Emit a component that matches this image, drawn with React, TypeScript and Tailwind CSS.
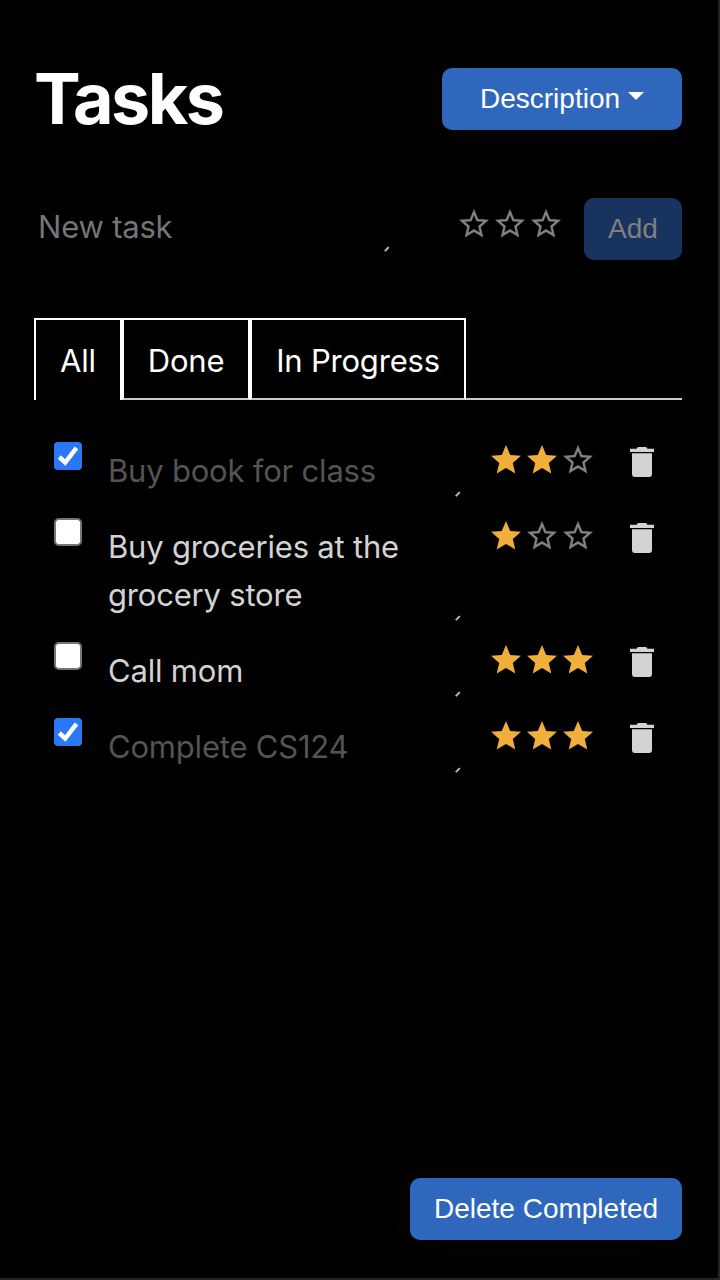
import React, { useState } from "react";

type Task = { id: number; text: string; done: boolean; priority: number };

const STAR =
  "M12 17.27L18.18 21l-1.64-7.03L22 9.24l-7.19-.61L12 2 9.19 8.63 2 9.24l5.46 4.73L5.82 21z";
const STAR_BORDER =
  "M22 9.24l-7.19-.62L12 2 9.19 8.63 2 9.24l5.46 4.73L5.82 21 12 17.27 18.18 21l-1.63-7.03L22 9.24zM12 15.4l-3.76 2.27 1-4.28-3.32-2.88 4.38-.38L12 6.1l1.71 4.04 4.38.38-3.32 2.88 1 4.28L12 15.4z";

function Stars({ value }: { value: number }) {
  return (
    <div className="flex h-9 w-[108px] shrink-0">
      {[1, 2, 3].map((n) => (
        <svg
          key={n}
          viewBox="0 0 24 24"
          className={n <= value ? "h-9 w-9 fill-[#f0ae3b]" : "h-9 w-9 fill-[#808080]"}
        >
          <path d={n <= value ? STAR : STAR_BORDER} />
        </svg>
      ))}
    </div>
  );
}

function Trash() {
  return (
    <svg viewBox="0 0 24 30" className="h-[30px] w-6 fill-[#d3d3d3]">
      <path d="M0 1.700H6.500L8 0H16L17.500 1.700H24V5H0Z M2 6.200H22V27Q22 30 19 30H5Q2 30 2 27Z" />
    </svg>
  );
}

function Grip() {
  return (
    <svg viewBox="0 0 6 6" className="h-1.5 w-1.5 shrink-0 stroke-[#c0c0c0]">
      <path d="M0.800 5.200L4.800 1.200" strokeWidth="1.900" />
    </svg>
  );
}

function Check({ checked, onClick }: { checked: boolean; onClick: () => void }) {
  return (
    <button
      role="checkbox"
      aria-checked={checked}
      onClick={onClick}
      className={
        checked
          ? "h-7 w-7 shrink-0 rounded-[4px] bg-[#2b78f6]"
          : "h-7 w-7 shrink-0 rounded-[5px] border-2 border-[#767676] bg-white"
      }
    >
      {checked && (
        <svg viewBox="0 0 28 28" className="h-7 w-7 fill-none stroke-white">
          <path d="M5.300 15L11.200 20.500L22.500 5.800" strokeWidth="4.500" />
        </svg>
      )}
    </button>
  );
}

const initial: Task[] = [
  { id: 1, text: "Buy book for class", done: true, priority: 2 },
  { id: 2, text: "Buy groceries at the grocery store", done: false, priority: 1 },
  { id: 3, text: "Call mom", done: false, priority: 3 },
  { id: 4, text: "Complete CS124", done: true, priority: 3 },
];

export default function App() {
  const [tasks, setTasks] = useState(initial);
  const toggle = (id: number) =>
    setTasks(tasks.map((t) => (t.id === id ? { ...t, done: !t.done } : t)));

  return (
    <div className="flex h-[1280px] w-[720px] flex-col overflow-hidden border-r-2 border-b-2 border-[#242424] bg-black pr-9 pb-[38px] pl-[34px] font-['Inter',sans-serif] text-white">
      <header className="flex h-[130px] items-end justify-between">
        <h1 className="h-[74px] text-[70px] leading-[86px] font-bold tracking-[-2.6px]">Tasks</h1>
        <button className="flex h-[62px] w-60 items-center justify-center gap-2 rounded-[10px] bg-[#2f67bc] font-['Liberation_Sans',sans-serif] text-[28px] shadow-[0_4px_40px_rgba(60,80,70,0.080)]">
          <span>Description</span>
          <svg viewBox="0 0 16 8" className="mb-1.5 h-2 w-4 fill-white">
            <path d="M0 0H16L8 8Z" />
          </svg>
        </button>
      </header>

      <div className="mt-[68px] flex h-[62px]">
        <div className="flex w-[356px] items-end pb-2">
          <span className="grow pl-1 text-[31px] leading-[50px] tracking-[-0.2px] text-[#757575]">
            New task
          </span>
          <Grip />
        </div>
        <div className="ml-8 pt-2 pl-[34px]">
          <Stars value={0} />
        </div>
        <button className="ml-5 h-[62px] w-[98px] rounded-[10px] bg-[#18335e] font-['Liberation_Sans',sans-serif] text-[28px] text-[#808080]">
          Add
        </button>
      </div>

      <nav className="mt-[58px] flex h-[82px] text-[31px] leading-[82px] tracking-[-0.2px]">
        <button className="w-[88px] border-2 border-b-0 border-white">All</button>
        <button className="w-32 border-2 border-white border-b-[#c8c8c8]">Done</button>
        <button className="w-[216px] border-2 border-white border-b-[#c8c8c8]">In Progress</button>
        <div className="grow border-b-2 border-[#c8c8c8]" />
      </nav>

      <main className="flex grow flex-col gap-[23px] pt-[42px] pl-5">
        {tasks.map((t) => (
          <div key={t.id} className="flex items-start">
            <Check checked={t.done} onClick={() => toggle(t.id)} />
            <div className="ml-[26px] flex w-[353px] justify-between">
              <span
                className={
                  t.done
                    ? "w-[310px] pt-[5px] text-[31px] leading-[48px] tracking-[-0.200px] text-[#545454]"
                    : "w-[310px] pt-[5px] text-[31px] leading-[48px] tracking-[-0.200px] text-[#d3d3d3]"
                }
              >
                {t.text}
              </span>
              <div className="-mb-0.5 self-end">
                <Grip />
              </div>
            </div>
            <div className="ml-[27px]">
              <Stars value={t.priority} />
            </div>
            <button aria-label="Delete task" className="mt-[5px] ml-[34px]">
              <Trash />
            </button>
          </div>
        ))}
      </main>

      <button className="h-[62px] w-[272px] shrink-0 self-end rounded-[10px] bg-[#2f67bc] font-['Liberation_Sans',sans-serif] text-[28px] shadow-[0_4px_40px_rgba(60,80,70,0.080)]">
        Delete Completed
      </button>
    </div>
  );
}
